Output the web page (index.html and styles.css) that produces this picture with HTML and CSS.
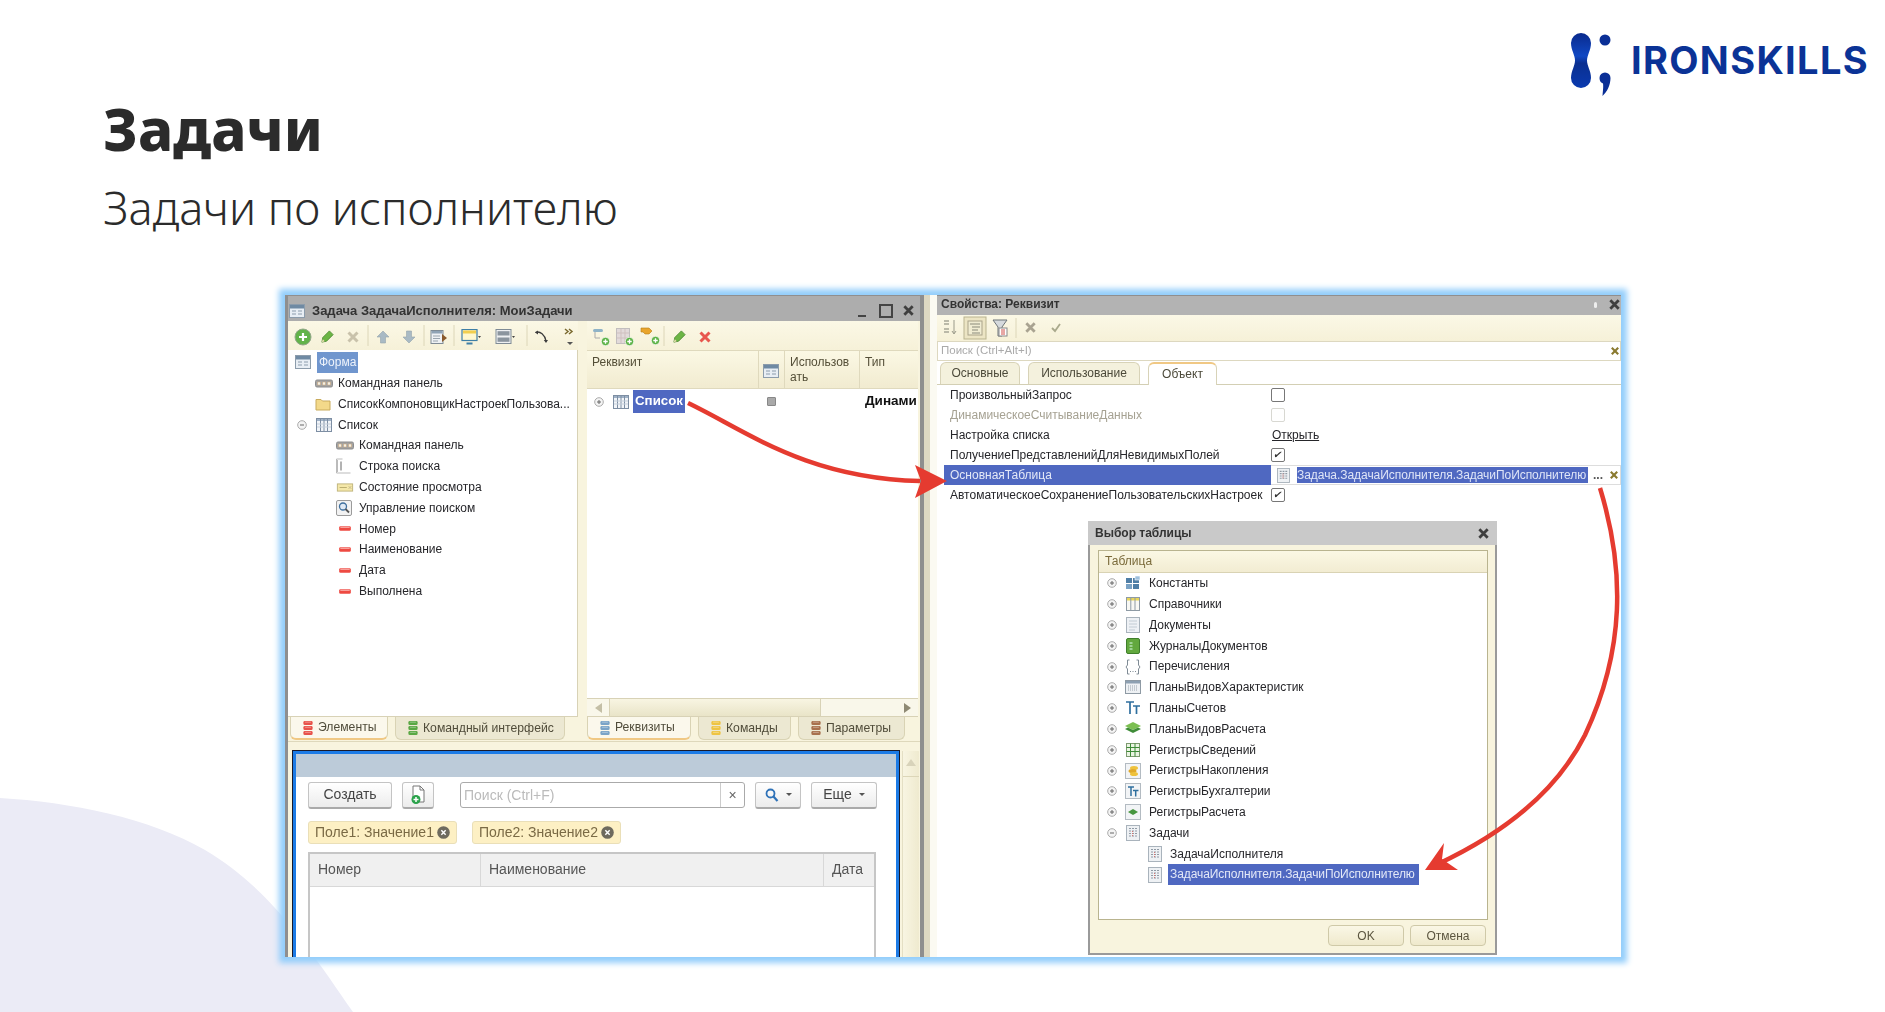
FILE: index.html
```html
<!DOCTYPE html>
<html>
<head>
  <title>Задачи</title>
  <link rel="stylesheet" href="styles.css">
</head>
<body>

<svg class="defs" width="0" height="0">
  <defs>
    <linearGradient id="logoGrad" x1="0" y1="0" x2="0" y2="1">
      <stop offset="0" stop-color="#0a2a8c"/><stop offset=".42" stop-color="#1048c4"/><stop offset=".55" stop-color="#0a2f90"/><stop offset="1" stop-color="#0a3ab0"/>
    </linearGradient>
    <symbol id="plus" viewBox="0 0 10 10"><circle cx="5" cy="5" r="4.3" fill="#f4f4f4" stroke="#aaa"/><path d="M3 5h4M5 3v4" stroke="#666" stroke-width="1"/></symbol>
    <symbol id="minus" viewBox="0 0 10 10"><circle cx="5" cy="5" r="4.3" fill="#f4f4f4" stroke="#aaa"/><path d="M3 5h4" stroke="#666" stroke-width="1"/></symbol>
    <symbol id="form" viewBox="0 0 16 16"><rect x=".5" y="1.5" width="15" height="13" fill="#e8eef4" stroke="#8c9cab"/><rect x="1" y="2" width="14" height="3.5" fill="#6f8aa3"/><path d="M3 8h4M9 8h4M3 11h4M9 11h4" stroke="#aab8c4" stroke-width="1.4"/></symbol>
    <symbol id="cmd" viewBox="0 0 18 9"><rect x=".5" y="1" width="17" height="7" rx="1.5" fill="#a3a3a3" stroke="#8d8d8d"/><path d="M2.500 3h3v3h-3zM7.500 3h3v3h-3zM12.500 3h3v3h-3z" fill="#f4f0e4" stroke="#c8a070" stroke-width=".5"/></symbol>
    <symbol id="folder" viewBox="0 0 16 16"><path d="M1 3.500h5l1.500 1.500H15v9H1z" fill="#f3d98a" stroke="#c9ab5c"/></symbol>
    <symbol id="table" viewBox="0 0 16 16"><rect x=".5" y="1.500" width="15" height="13" fill="#f1f4f8" stroke="#7d8ea3"/><rect x="1" y="2" width="14" height="2" fill="#9fb1c6"/><path d="M4.500 2v12M8 2v12M11.500 2v12" stroke="#7d8ea3"/><path d="M1 7h14M1 10h14" stroke="#c5cfdb"/></symbol>
    <symbol id="searchline" viewBox="0 0 16 16"><path d="M.5 1h6M.5 1v14h14M1.500 2v12" fill="none" stroke="#bbb"/><path d="M5 3.500v9" stroke="#666"/></symbol>
    <symbol id="state" viewBox="0 0 18 10"><rect x=".5" y="1" width="17" height="8" fill="#f4e7a8" stroke="#bdb27a"/><path d="M3 5h8" stroke="#b5a86a"/><path d="M13 3.500l3 3M16 3.500l-3 3" stroke="#c4b98a"/></symbol>
    <symbol id="findbox" viewBox="0 0 16 16"><rect x=".5" y=".5" width="15" height="15" rx="1.500" fill="#f2f2f2" stroke="#9b9b9b"/><circle cx="7" cy="6.500" r="3.500" fill="#dfe9f4" stroke="#3e6f9e" stroke-width="1.300"/><path d="M9.500 9l3.500 3.500" stroke="#555" stroke-width="1.800"/></symbol>
    <symbol id="field" viewBox="0 0 12 6"><rect x="1" y="1" width="10" height="4" rx="1.200" fill="#ee4a42"/><path d="M2 2h8" stroke="#f9aaa5"/></symbol>
    <symbol id="addgreen" viewBox="0 0 18 18"><circle cx="9" cy="9" r="8" fill="#62b34a" stroke="#93a78a"/><path d="M9 5v8M5 9h8" stroke="#fff" stroke-width="2.200"/></symbol>
    <symbol id="mini" viewBox="0 0 8 8"><circle cx="4" cy="4" r="3.700" fill="#5cb246" stroke="#fff" stroke-width=".6"/><path d="M4 2v4M2 4h4" stroke="#fff" stroke-width="1.200"/></symbol>
    <symbol id="pencil" viewBox="0 0 16 16"><path d="M2 14l1-5 7-7 4 4-7 7z" fill="#6cb545" stroke="#3f7f28" stroke-width=".8"/><path d="M2 14l1-3 2 2z" fill="#f3e2b8"/></symbol>
    <symbol id="cross" viewBox="0 0 14 14"><path d="M2.500 2.500l9 9M11.500 2.500l-9 9" stroke="currentColor" stroke-width="3"/></symbol>
    <symbol id="up" viewBox="0 0 16 16"><path d="M8 2l6 6h-3.500v6h-5V8H2z" fill="#a9bac4" stroke="#96a4ac" stroke-width=".6"/></symbol>
    <symbol id="down" viewBox="0 0 16 16"><path d="M8 14l6-6h-3.500V2h-5v6H2z" fill="#a9bac4" stroke="#96a4ac" stroke-width=".6"/></symbol>
    <symbol id="run" viewBox="0 0 18 16"><rect x="1" y="1.500" width="12" height="13" fill="#eef1f4" stroke="#7f8b95"/><rect x="1.500" y="2" width="11" height="2.500" fill="#8fa3b5"/><path d="M3 7h7M3 9.500h7M3 12h5" stroke="#9aa5ae"/><path d="M12 5l5 4-5 4z" fill="#8a5a2c"/></symbol>
    <symbol id="monitor" viewBox="0 0 20 16"><rect x="1" y=".5" width="15" height="11" fill="#fff8cf" stroke="#3f7fa6" stroke-width="1.200"/><rect x="2" y="1.500" width="13" height="3" fill="#f2cf4f"/><path d="M5.500 14.500h6" stroke="#3f7fa6" stroke-width="2"/><path d="M17 7h3l-1.500 2z" fill="#444"/></symbol>
    <symbol id="rows" viewBox="0 0 20 16"><rect x="1" y=".5" width="15" height="14" fill="#eef0f2" stroke="#7f8b95"/><rect x="2.500" y="2.200" width="12" height="4.300" fill="#8b959e"/><rect x="2.500" y="8.500" width="12" height="4.300" fill="#8b959e"/><path d="M17 7h3l-1.500 2z" fill="#444"/></symbol>
    <symbol id="curve" viewBox="0 0 16 16"><path d="M1.500 3.500C6 1.500 11 6 12 12" fill="none" stroke="#3c3c3c" stroke-width="1.300"/><path d="M1 3.500L4 1.500v4zM12 14l-2.200-3h4.200z" fill="#3c3c3c"/></symbol>
    <symbol id="attr" viewBox="0 0 16 16"><rect x="1" y="1" width="10" height="3" rx="1.500" fill="#8fb3c7"/><path d="M3 4v6h5" fill="none" stroke="#aaa"/></symbol>
    <symbol id="gridgray" viewBox="0 0 16 16"><rect x=".5" y=".5" width="13" height="15" fill="#e2dada" stroke="#c2bebe"/><path d="M5 1v14M9 1v14M1 5h12M1 10h12" stroke="#cfc0bf"/></symbol>
    <symbol id="key" viewBox="0 0 16 16"><path d="M1 1h8l3 3-3 3H5L3 5H1z" fill="#e9a52c" stroke="#b67c19" stroke-width=".6"/></symbol>
    <symbol id="stack" viewBox="0 0 12 18"><rect x=".5" y=".5" width="11" height="4.800" rx="1.500" fill="currentColor"/><rect x=".5" y="6.600" width="11" height="4.800" rx="1.500" fill="currentColor"/><rect x=".5" y="12.700" width="11" height="4.800" rx="1.500" fill="currentColor"/><path d="M2.500 2h7M2.500 8.100h7M2.500 14.200h7" stroke="#fff" stroke-opacity=".45"/></symbol>
    <symbol id="newdoc" viewBox="0 0 16 20"><path d="M3 1h7l4 4v12H3z" fill="#fff" stroke="#777"/><path d="M10 1v4h4" fill="none" stroke="#777"/><circle cx="6" cy="14.500" r="4.500" fill="#2aa24a"/><path d="M6 12v5M3.500 14.500h5" stroke="#fff" stroke-width="1.500"/></symbol>
    <symbol id="lens" viewBox="0 0 14 14"><circle cx="5.500" cy="5.500" r="4" fill="none" stroke="#2e72b8" stroke-width="1.800"/><path d="M8.500 8.500l4 4.500" stroke="#2e72b8" stroke-width="2.200"/></symbol>
    <symbol id="chipx" viewBox="0 0 12 12"><circle cx="6" cy="6" r="5.800" fill="#6e6a5e"/><path d="M4 4l4 4M8 4l-4 4" stroke="#fff" stroke-width="1.300"/></symbol>
    <symbol id="sortaz" viewBox="0 0 14 18"><path d="M11 2v13M9 13l2 3 2-3" fill="none" stroke="#9a9a8a"/><path d="M1 3h5M1 6h5M1 11h5M1 14h5" stroke="#a6a696" stroke-width="1.300"/></symbol>
    <symbol id="tree" viewBox="0 0 16 16"><rect x="1" y="1" width="14" height="14" fill="#f0ecd2" stroke="#aaa48a"/><path d="M3 4h10M5 7h8M5 10h6M5 13h8" stroke="#8a8a7a"/></symbol>
    <symbol id="funnel" viewBox="0 0 16 18"><path d="M1 1h14L10 8v9H6V8z" fill="#d6dadd" stroke="#6d7478"/><rect x="7" y="9" width="8" height="8" fill="#fff" stroke="#888"/><path d="M9 11h4M9 13h4M9 15h4" stroke="#d0504a"/></symbol>
    <symbol id="check" viewBox="0 0 12 12"><path d="M2 6l3 3 5-7" fill="none" stroke="#a9a98c" stroke-width="1.800"/></symbol>
    <symbol id="task" viewBox="0 0 14 16"><rect x=".5" y=".5" width="13" height="15" fill="#eef1f4" stroke="#a9b3bc"/><path d="M3 3.500h8M3 6h8M3 8.500h8M3 11h8" stroke="#8f9aa5" stroke-dasharray="2 1" stroke-width="1.200"/><path d="M6.500 6v6" stroke="#d6746e" stroke-dasharray="1 1"/></symbol>
    <symbol id="const" viewBox="0 0 16 16"><rect x="1" y="3" width="6" height="5" fill="#4f7ea6"/><rect x="8" y="3" width="6" height="5" fill="#4f7ea6"/><rect x="1" y="9" width="6" height="5" fill="#7aa2c4"/><rect x="8" y="9" width="6" height="5" fill="#4f7ea6"/><rect x="10" y="1" width="5" height="4" fill="#9dbfdc" stroke="#fff" stroke-width=".6"/></symbol>
    <symbol id="catalog" viewBox="0 0 16 16"><rect x="1.500" y="1.500" width="13" height="13" fill="#f8f8f4" stroke="#8e9aa4"/><rect x="2" y="2" width="12" height="2.500" fill="#e8d55a"/><path d="M5.800 2v12M10 2v12" stroke="#8e9aa4"/></symbol>
    <symbol id="doc" viewBox="0 0 16 16"><rect x="1.500" y=".5" width="13" height="15" fill="#eef1f5" stroke="#a9b3bc"/><path d="M4 4h8M4 7h8M4 10h8M4 13h6" stroke="#c3ccd4"/></symbol>
    <symbol id="journal" viewBox="0 0 16 16"><rect x="1.500" y=".5" width="13" height="15" rx="1.500" fill="#62a83e" stroke="#3f7f2c"/><path d="M4.500 5h3M4.500 8h3M4.500 11h3" stroke="#dfe"/></symbol>
    <symbol id="enum" viewBox="0 0 16 16"><path d="M4.500 1H2.500v5L1 8l1.500 2v5h2M11.500 1h2v5L15 8l-1.500 2v5h-2" fill="none" stroke="#7f8b95"/><path d="M5 12.500h1M7.500 12.500h1M10 12.500h1" stroke="#7f8b95"/></symbol>
    <symbol id="chart" viewBox="0 0 16 16"><rect x=".5" y="1.500" width="15" height="13" fill="#eef1f4" stroke="#8e9aa4"/><rect x="1" y="2" width="14" height="2.500" fill="#8da0b2"/><path d="M3 7h10M3 9h10M3 11h10" stroke="#99a4ae" stroke-dasharray="1 1"/></symbol>
    <symbol id="ttsym" viewBox="0 0 16 16"><path d="M1 2h8M5 2v12M8 6h7M11.500 6v8" stroke="#2f6f9e" stroke-width="1.700" fill="none"/></symbol>
    <symbol id="calc" viewBox="0 0 16 16"><path d="M8 1l8 4-8 4-8-4z" fill="#7cbf52"/><path d="M0 8l3-1.500 5 2.500 5-2.500 3 1.500-8 4z" fill="#3f8c38"/></symbol>
    <symbol id="inforeg" viewBox="0 0 16 16"><rect x="1.500" y="1.500" width="13" height="13" fill="#eaf4e2" stroke="#7d9a70"/><path d="M1.500 5.500h13M1.500 9.500h13M5.500 1.500v13M10 1.500v13" stroke="#3d8a37"/></symbol>
    <symbol id="accum" viewBox="0 0 16 16"><rect x=".5" y=".5" width="15" height="15" fill="#f2f4f6" stroke="#b3bbc2"/><ellipse cx="9" cy="5" rx="4" ry="2" fill="#eec23c"/><ellipse cx="7.500" cy="8" rx="4" ry="2" fill="#e0a92a"/><ellipse cx="9" cy="11" rx="4" ry="2" fill="#eec23c"/></symbol>
    <symbol id="accreg" viewBox="0 0 16 16"><rect x=".5" y=".5" width="15" height="15" fill="#f2f4f6" stroke="#b3bbc2"/><path d="M3 4h6M6 4v9M8 7.500h5.500M10.700 7.500v6" stroke="#2f6f9e" stroke-width="1.500" fill="none"/></symbol>
    <symbol id="calcreg" viewBox="0 0 16 16"><rect x=".5" y=".5" width="15" height="15" fill="#f2f4f6" stroke="#b3bbc2"/><path d="M8 5l5 3-5 3-5-3z" fill="#46963f"/></symbol>
  </defs>
</svg>

<div class="slide">
  <svg class="blob" width="360" height="220" viewBox="0 792 360 220">
    <path d="M0 798C70 802 150 818 205 850C270 888 310 950 353 1012H0Z" fill="#ebebf6"/>
  </svg>

  <header class="top">
    <div class="heading">
      <h1>Задачи</h1>
      <p>Задачи по исполнителю</p>
    </div>
    <div class="logo">
      <svg width="44" height="68" viewBox="0 0 44 68">
        <path d="M2 13A10 10 0 0 1 22 13C22 20 18 25 18 30.500C18 36 22 41 22 48A10 10 0 0 1 2 48C2 41 6 36 6 30.500C6 25 2 20 2 13Z" fill="url(#logoGrad)"/>
        <circle cx="36" cy="10" r="5.500" fill="#0a2f96"/>
        <path d="M30.500 48A5.500 5.500 0 0 1 41.500 48C41.500 55 38 62 33.500 66C34 60 34.500 57 34 53.500C32 53 30.500 51 30.500 48Z" fill="#0a2f96"/>
      </svg>
      <span>IRONSKILLS</span>
    </div>
  </header>

  <div class="shot">
    <div class="shot-inner">

      <section class="win-left">
        <div class="titlebar left-title">
          <svg class="ic title-ic"><use href="#form"/></svg>
          <b>Задача ЗадачаИсполнителя: МоиЗадачи</b>
          <span class="win-btns">
            <i class="btn-min"></i><i class="btn-max"></i>
            <svg width="13" height="13"><use href="#cross" width="13" height="13" color="#3f3f3f"/></svg>
          </span>
        </div>

        <div class="left-body">
          <div class="panes">
            <div class="pane pane-tree">
              <svg class="strip" width="290" height="29" viewBox="288 321 290 29">
                <use href="#addgreen" x="294" y="328" width="18" height="18"/>
                <use href="#pencil" x="320" y="329" width="15" height="15"/>
                <use href="#cross" x="346" y="330" width="14" height="14" color="#c9c2ab"/>
                <path d="M368 325v21M424 325v21M454 325v21M527 325v21" stroke="#dcd6b8"/>
                <use href="#up" x="375" y="329" width="16" height="16"/>
                <use href="#down" x="401" y="329" width="16" height="16"/>
                <use href="#run" x="430" y="329" width="18" height="16"/>
                <use href="#monitor" x="461" y="329" width="20" height="16"/>
                <use href="#rows" x="495" y="329" width="20" height="16"/>
                <use href="#curve" x="534" y="329" width="16" height="16"/>
                <path d="M565 329l3 2.500-3 2.500M569 329l3 2.500-3 2.500" fill="none" stroke="#7b6a30" stroke-width="1.500"/>
                <path d="M567 342h6l-3 3z" fill="#555"/>
              </svg>
              <div class="tree">
                <div class="row root"><svg class="ic"><use href="#form"/></svg><span class="sel-form">Форма</span></div>
                <div class="row l1"><svg class="ic wide"><use href="#cmd"/></svg><span>Командная панель</span></div>
                <div class="row l1"><svg class="ic"><use href="#folder"/></svg><span>СписокКомпоновщикНастроекПользова...</span></div>
                <div class="row l1 has-exp"><svg class="exp"><use href="#minus"/></svg><svg class="ic"><use href="#table"/></svg><span>Список</span></div>
                <div class="row l2"><svg class="ic wide"><use href="#cmd"/></svg><span>Командная панель</span></div>
                <div class="row l2"><svg class="ic"><use href="#searchline"/></svg><span>Строка поиска</span></div>
                <div class="row l2"><svg class="ic wide"><use href="#state"/></svg><span>Состояние просмотра</span></div>
                <div class="row l2"><svg class="ic"><use href="#findbox"/></svg><span>Управление поиском</span></div>
                <div class="row l2"><svg class="ic small"><use href="#field"/></svg><span>Номер</span></div>
                <div class="row l2"><svg class="ic small"><use href="#field"/></svg><span>Наименование</span></div>
                <div class="row l2"><svg class="ic small"><use href="#field"/></svg><span>Дата</span></div>
                <div class="row l2"><svg class="ic small"><use href="#field"/></svg><span>Выполнена</span></div>
              </div>
              <div class="tabs tabs-left">
                <div class="tab active t-elements"><svg class="stack red"><use href="#stack"/></svg>Элементы</div>
                <div class="tab t-iface"><svg class="stack green"><use href="#stack"/></svg>Командный интерфейс</div>
              </div>
            </div>

            <div class="pane pane-attrs">
              <svg class="strip" width="331" height="29" viewBox="587 321 331 29">
                <use href="#attr" x="592" y="328" width="16" height="16"/><use href="#mini" x="601" y="337" width="9" height="9"/>
                <use href="#gridgray" x="616" y="328" width="16" height="16"/><use href="#mini" x="625" y="337" width="9" height="9"/>
                <use href="#key" x="640" y="327" width="16" height="16"/><use href="#mini" x="651" y="336" width="9" height="9"/>
                <path d="M664 326v20" stroke="#dcd6b8"/>
                <use href="#pencil" x="672" y="329" width="15" height="15"/>
                <use href="#cross" x="698" y="330" width="14" height="14" color="#e8574e"/>
              </svg>
              <div class="attr-head">
                <div class="col-name">Реквизит</div>
                <div class="col-ic"><svg class="ic"><use href="#form"/></svg></div>
                <div class="col-use">Использов<br>ать</div>
                <div class="col-type">Тип</div>
              </div>
              <div class="attr-body">
                <div class="attr-row">
                  <svg class="exp"><use href="#plus"/></svg>
                  <svg class="ic"><use href="#table"/></svg>
                  <b class="sel-list">Список</b>
                  <i class="mini-check"></i>
                  <b class="dyn">Динами</b>
                </div>
              </div>
              <div class="hscroll">
                <span class="arrow-l"></span>
                <div class="thumb"></div>
                <span class="arrow-r"></span>
              </div>
              <div class="tabs tabs-right">
                <div class="tab active"><svg class="stack blue"><use href="#stack"/></svg>Реквизиты</div>
                <div class="tab"><svg class="stack yellow"><use href="#stack"/></svg>Команды</div>
                <div class="tab"><svg class="stack brown"><use href="#stack"/></svg>Параметры</div>
              </div>
            </div>
          </div>

          <div class="preview-wrap">
            <div class="preview">
              <div class="preview-title"></div>
              <div class="preview-bar">
                <div class="pbtn p-create">Создать</div>
                <div class="pbtn p-new"><svg width="16" height="20"><use href="#newdoc"/></svg></div>
                <div class="psearch"><span>Поиск (Ctrl+F)</span><em>×</em></div>
                <div class="pbtn p-find"><svg width="14" height="14"><use href="#lens"/></svg><i class="caret"></i></div>
                <div class="pbtn p-more">Еще<i class="caret"></i></div>
              </div>
              <div class="chips">
                <div class="chip">Поле1: Значение1<svg width="13" height="13"><use href="#chipx"/></svg></div>
                <div class="chip">Поле2: Значение2<svg width="13" height="13"><use href="#chipx"/></svg></div>
              </div>
              <div class="ptable">
                <div class="pth th-num">Номер</div>
                <div class="pth th-name">Наименование</div>
                <div class="pth th-date">Дата</div>
              </div>
            </div>
            <div class="vscroll"><span></span></div>
          </div>
        </div>
      </section>

      <div class="gutter"></div>

      <section class="win-props">
        <div class="titlebar props-title">
          <b>Свойства: Реквизит</b>
          <span class="win-btns">
            <i class="pin"></i>
            <svg width="13" height="13"><use href="#cross" width="13" height="13" color="#3f3f3f"/></svg>
          </span>
        </div>
        <svg class="strip props-strip" width="684" height="26" viewBox="937 315 684 26">
          <use href="#sortaz" x="943" y="318" width="14" height="18"/>
          <rect x="964" y="317" width="22" height="22" fill="#ece5c4" stroke="#b9b38f"/>
          <use href="#tree" x="967" y="320" width="16" height="16"/>
          <use href="#funnel" x="992" y="319" width="16" height="18"/>
          <path d="M1016 318v20" stroke="#dcd6b8"/>
          <use href="#cross" x="1024" y="321" width="13" height="13" color="#a9a391"/>
          <use href="#check" x="1050" y="322" width="12" height="12"/>
        </svg>
        <div class="props-search"><span>Поиск (Ctrl+Alt+I)</span><svg width="10" height="10"><use href="#cross" width="10" height="10" color="#8a7a30"/></svg></div>
        <div class="props-tabs">
          <div class="ptab">Основные</div>
          <div class="ptab">Использование</div>
          <div class="ptab active">Объект</div>
        </div>
        <div class="props-rows">
          <div class="prow"><div class="plabel">ПроизвольныйЗапрос</div><div class="pval"><i class="cb"></i></div></div>
          <div class="prow off"><div class="plabel">ДинамическоеСчитываниеДанных</div><div class="pval"><i class="cb"></i></div></div>
          <div class="prow"><div class="plabel">Настройка списка</div><div class="pval"><u>Открыть</u></div></div>
          <div class="prow"><div class="plabel">ПолучениеПредставленийДляНевидимыхПолей</div><div class="pval"><i class="cb on"></i></div></div>
          <div class="prow cur">
            <div class="plabel">ОсновнаяТаблица</div>
            <div class="pval edit">
              <svg width="13" height="15"><use href="#task"/></svg>
              <span class="sel-val">Задача.ЗадачаИсполнителя.ЗадачиПоИсполнителю</span>
              <span class="dots">...</span>
              <svg width="10" height="10"><use href="#cross" width="10" height="10" color="#8a7a30"/></svg>
            </div>
          </div>
          <div class="prow"><div class="plabel">АвтоматическоеСохранениеПользовательскихНастроек</div><div class="pval"><i class="cb on"></i></div></div>
        </div>
      </section>

      <section class="dialog">
        <div class="dlg-title"><b>Выбор таблицы</b><svg width="13" height="13"><use href="#cross" width="13" height="13" color="#3f3f3f"/></svg></div>
        <div class="dlg-panel">
          <div class="dlg-head">Таблица</div>
          <div class="dlg-list">
            <div class="drow"><svg class="exp"><use href="#plus"/></svg><svg class="ic"><use href="#const"/></svg><span>Константы</span></div>
            <div class="drow"><svg class="exp"><use href="#plus"/></svg><svg class="ic"><use href="#catalog"/></svg><span>Справочники</span></div>
            <div class="drow"><svg class="exp"><use href="#plus"/></svg><svg class="ic"><use href="#doc"/></svg><span>Документы</span></div>
            <div class="drow"><svg class="exp"><use href="#plus"/></svg><svg class="ic"><use href="#journal"/></svg><span>ЖурналыДокументов</span></div>
            <div class="drow"><svg class="exp"><use href="#plus"/></svg><svg class="ic"><use href="#enum"/></svg><span>Перечисления</span></div>
            <div class="drow"><svg class="exp"><use href="#plus"/></svg><svg class="ic"><use href="#chart"/></svg><span>ПланыВидовХарактеристик</span></div>
            <div class="drow"><svg class="exp"><use href="#plus"/></svg><svg class="ic"><use href="#ttsym"/></svg><span>ПланыСчетов</span></div>
            <div class="drow"><svg class="exp"><use href="#plus"/></svg><svg class="ic"><use href="#calc"/></svg><span>ПланыВидовРасчета</span></div>
            <div class="drow"><svg class="exp"><use href="#plus"/></svg><svg class="ic"><use href="#inforeg"/></svg><span>РегистрыСведений</span></div>
            <div class="drow"><svg class="exp"><use href="#plus"/></svg><svg class="ic"><use href="#accum"/></svg><span>РегистрыНакопления</span></div>
            <div class="drow"><svg class="exp"><use href="#plus"/></svg><svg class="ic"><use href="#accreg"/></svg><span>РегистрыБухгалтерии</span></div>
            <div class="drow"><svg class="exp"><use href="#plus"/></svg><svg class="ic"><use href="#calcreg"/></svg><span>РегистрыРасчета</span></div>
            <div class="drow"><svg class="exp"><use href="#minus"/></svg><svg class="ic"><use href="#task"/></svg><span>Задачи</span></div>
            <div class="drow child"><svg class="ic"><use href="#task"/></svg><span>ЗадачаИсполнителя</span></div>
            <div class="drow child"><svg class="ic"><use href="#task"/></svg><span class="sel-task">ЗадачаИсполнителя.ЗадачиПоИсполнителю</span></div>
          </div>
        </div>
        <div class="dlg-btns">
          <div class="dbtn">OK</div>
          <div class="dbtn">Отмена</div>
        </div>
      </section>
    </div>
  </div>

  <svg class="arrows" width="1885" height="1012">
    <g fill="none" stroke="#e53b30" stroke-width="4.500">
      <path d="M688 403C745 430 805 478 920 481"/>
      <path d="M1600 488C1625 570 1625 650 1585 735C1555 795 1500 835 1438 864"/>
    </g>
    <path d="M947 481L915 465L921 481L915 498Z" fill="#e53b30"/>
    <path d="M1425 870L1444 843L1442 859L1458 870Z" fill="#e53b30"/>
  </svg>
</div>

</body>
</html>
```

FILE: styles.css
```css
html, body {
  margin: 0;
  background: #fff;
}
.defs {
  position: absolute;
}
.slide {
  position: relative;
  width: 1885px;
  height: 1012px;
  overflow: hidden;
  background: #fff;
}
.blob {
  position: absolute;
  left: 0;
  bottom: 0;
}
.arrows {
  position: absolute;
  left: 0;
  top: 0;
  pointer-events: none;
}

/* slide header */
.top {
  position: relative;
  display: flex;
  justify-content: space-between;
  height: 295px;
  box-sizing: border-box;
  padding-left: 103px;
  padding-right: 16px;
}
.heading h1 {
  margin: 89px 0 0;
  font: 800 58px/80px "Noto Sans", sans-serif;
  color: #2b2b2b;
}
.heading p {
  margin: 9px 0 0;
  font: 300 45.2px/60px "Noto Sans", sans-serif;
  color: #2b2b2b;
}
.logo {
  display: flex;
  align-items: flex-start;
  margin-top: 30px;
  height: 68px;
}
.logo span {
  margin: 8px 0 0 18px;
  font: 700 38px/44px "Inter", sans-serif;
  letter-spacing: 1.35px;
  color: #0b3396;
}

/* screenshot */
.shot {
  position: relative;
  margin-left: 285px;
  width: 1336px;
  height: 662px;
  box-shadow: 0 0 6px 6px #93cefb;
}
.shot-inner {
  position: relative;
  display: flex;
  width: 100%;
  height: 100%;
  overflow: hidden;
  background: #fff;
  filter: blur(.5px);
  font: 12px/1.2 "Liberation Sans", sans-serif;
  color: #26262a;
}
.ic {
  width: 16px;
  height: 16px;
  flex: none;
}
.ic.wide {
  width: 18px;
  height: 9px;
}
.ic.small {
  width: 14px;
  height: 7px;
  margin-left: 2px;
}
.exp {
  width: 10px;
  height: 10px;
  flex: none;
}
.strip {
  display: block;
  flex: none;
  background: linear-gradient(#fbf8e6, #f6f1d8);
}
.titlebar {
  display: flex;
  align-items: center;
  height: 26px;
  background: #adadad;
  border-top: 1px solid #8f8f8f;
  box-sizing: border-box;
  padding: 0 5px;
}
.titlebar b {
  font-size: 13px;
  color: #333;
}
.left-title {
  padding: 4px 5px 0 1px;
}
.title-ic {
  margin-right: 7px;
}
.win-btns {
  display: flex;
  align-items: center;
  gap: 8px;
  margin-left: auto;
}
.btn-min {
  width: 8px;
  height: 2px;
  margin-top: 10px;
  background: #444;
}
.btn-max {
  width: 10px;
  height: 10px;
  border: 2px solid #444;
  margin: 0 1px 0 5px;
}
.pin {
  width: 3px;
  height: 6px;
  background: #eee;
  border-radius: 2px;
  margin-right: 3px;
}

/* left window */
.win-left {
  width: 635px;
  flex: none;
  display: flex;
  flex-direction: column;
  border-left: 3px solid #8f8f8f;
  box-sizing: border-box;
}
.left-body {
  flex: 1;
  display: flex;
  flex-direction: column;
  min-height: 0;
  background: #f8f4de;
}
.panes {
  display: flex;
  gap: 9px;
  height: 420px;
  flex: none;
  border-bottom: 1px solid #ded8bb;
}
.pane {
  display: flex;
  flex-direction: column;
}
.pane-tree {
  width: 290px;
}
.pane-attrs {
  width: 331px;
}
.tree {
  flex: 1;
  padding-top: 2px;
  background: #fff;
  border-right: 1px solid #d8d2b6;
  border-bottom: 1px solid #d8d2b6;
}
.row {
  display: flex;
  align-items: center;
  height: 20.8px;
  white-space: nowrap;
}
.row.root { padding-left: 7px; gap: 6px; }
.row.l1 { padding-left: 27px; gap: 7px; }
.row.l2 { padding-left: 48px; gap: 7px; }
.row.has-exp { padding-left: 9px; gap: 0; }
.row.has-exp .exp { margin-right: 9px; }
.row.has-exp .ic { margin-right: 6px; }
.row .wide + span { margin-left: -2px; }
.sel-form {
  background: #7096ce;
  color: #eef3fb;
  padding: 3px 2px;
}

/* bottom tabs */
.tabs {
  display: flex;
  flex: none;
  height: 24px;
  padding-left: 2px;
  gap: 7px;
  font-size: 12.2px;
}
.tab {
  display: flex;
  align-items: center;
  gap: 5px;
  padding: 0 6px 0 12px;
  box-sizing: border-box;
  height: 23px;
  background: #ece8d2;
  border: 1px solid #d9d3b4;
  border-top: 0;
  border-radius: 0 0 6px 6px;
  color: #504c3a;
  white-space: nowrap;
}
.tab.active {
  background: #fbf8ec;
  border-bottom: 2px solid #f0c884;
}
.t-elements { width: 98px; }
.t-iface { width: 170px; }
.tabs-right .tab:nth-child(1) { width: 104px; }
.tabs-right .tab:nth-child(2) { width: 93px; }
.tabs-right .tab:nth-child(3) { width: 107px; }
.tabs-right {
  padding-left: 0;
}
.stack {
  width: 10px;
  height: 16px;
  flex: none;
}
.red { color: #e8534a; }
.green { color: #5aa845; }
.blue { color: #7ba4c7; }
.yellow { color: #eec443; }
.brown { color: #a8714d; }

/* attributes table */
.attr-head {
  display: flex;
  flex: none;
  height: 39px;
  background: linear-gradient(#fbf8e4, #f1ebd0);
  border-top: 1px solid #dfd9bd;
  border-bottom: 1px solid #dfd9bd;
  box-sizing: border-box;
  color: #544f38;
  line-height: 15px;
}
.attr-head > div {
  padding: 4px 5px;
  box-sizing: border-box;
  border-right: 1px solid #dfd9bd;
}
.col-name { width: 172px; }
.col-ic { width: 26px; padding: 12px 4px 0 !important; }
.col-use { width: 75px; }
.col-type { flex: 1; border-right: 0 !important; }
.attr-body {
  flex: 1;
  background: #fff;
  border-bottom: 1px solid #d8d2b6;
  overflow: hidden;
}
.attr-row {
  display: flex;
  align-items: center;
  height: 25px;
  padding-left: 7px;
  white-space: nowrap;
}
.attr-row .ic {
  margin-left: 9px;
}
.sel-list {
  margin-left: 4px;
  padding: 3px 2px 4px;
  width: 52px;
  box-sizing: border-box;
  background: #4f68c1;
  color: #fff;
  font-size: 13.3px;
}
.mini-check {
  width: 7px;
  height: 7px;
  margin-left: 82px;
  flex: none;
  background: #a9a9a9;
  border: 1px solid #888;
  border-radius: 1px;
}
.dyn {
  margin-left: 89px;
  color: #111;
  font-size: 13.5px;
}
.hscroll {
  display: flex;
  align-items: center;
  flex: none;
  height: 17px;
  background: #f9f7ea;
  border-bottom: 1px solid #d8d2b6;
}
.thumb {
  width: 210px;
  height: 100%;
  background: linear-gradient(#f8f5e2, #e9e4c8);
  border-right: 1px solid #d8d2b6;
  border-left: 1px solid #d8d2b6;
}
.arrow-l, .arrow-r {
  width: 0;
  height: 0;
  margin: 0 7px 0 8px;
  border: 5px solid transparent;
  border-left: 0;
  border-right: 7px solid #c4bfa6;
}
.arrow-r {
  margin: 0 7px 0 auto;
  border-right: 0;
  border-left: 7px solid #8f8a74;
}

/* preview of the form */
.preview-wrap {
  flex: 1;
  display: flex;
  min-height: 0;
  padding: 9px 0 0 5px;
  gap: 3px;
  background: #f8f4de;
}
.preview {
  width: 606px;
  flex: none;
  background: #fff;
  border: 3px solid #1c7be6;
  border-bottom: 0;
  outline: 1px solid #1a1a2a;
  box-sizing: border-box;
  font-size: 14px;
  color: #555;
}
.preview-title {
  height: 23px;
  background: #bccbd9;
}
.preview-bar {
  display: flex;
  align-items: center;
  margin: 4px 0 0 12px;
  height: 28px;
}
.pbtn {
  display: flex;
  align-items: center;
  justify-content: center;
  height: 27px;
  box-sizing: border-box;
  background: linear-gradient(#fff, #ececec);
  border: 1px solid #c4c4c4;
  border-bottom: 2px solid #aaa;
  border-radius: 3px;
  color: #444;
}
.p-create { width: 84px; }
.p-new { width: 32px; margin-left: 10px; }
.psearch {
  display: flex;
  align-items: center;
  justify-content: space-between;
  width: 285px;
  height: 26px;
  margin-left: 26px;
  box-sizing: border-box;
  border: 1px solid #aaa;
  border-radius: 3px;
  padding-left: 3px;
  color: #bbb;
}
.psearch em {
  width: 23px;
  line-height: 24px;
  text-align: center;
  font-style: normal;
  color: #666;
  border-left: 1px solid #ccc;
}
.p-find { width: 46px; margin-left: 10px; gap: 7px; }
.p-more { width: 66px; margin-left: 10px; gap: 7px; }
.caret {
  border: 3px solid transparent;
  border-top: 3px solid #555;
  border-bottom: 0;
}
.chips {
  display: flex;
  gap: 15px;
  margin: 12px 0 0 12px;
}
.chip {
  display: flex;
  align-items: center;
  justify-content: space-between;
  width: 149px;
  height: 23px;
  box-sizing: border-box;
  padding: 0 6px;
  background: #fdf0c4;
  border: 1px solid #eadfb8;
  border-radius: 3px;
  color: #7a6a45;
}
.ptable {
  display: flex;
  margin: 8px 0 0 12px;
  width: 568px;
  height: 200px;
  box-sizing: border-box;
  border: 2px solid #c6c6c6;
}
.pth {
  height: 33px;
  box-sizing: border-box;
  padding: 7px 8px 0;
  background: #f0f0f0;
  border-bottom: 1px solid #d8d8d8;
  border-right: 1px solid #d8d8d8;
  color: #555;
}
.th-num { width: 171px; }
.th-name { width: 343px; }
.th-date { flex: 1; border-right: 0; }
.vscroll {
  width: 16px;
  background: linear-gradient(90deg, #f8f5e2, #efeacf);
  border-left: 1px solid #e4dfc4;
}
.vscroll span {
  display: block;
  height: 26px;
  box-sizing: border-box;
  border-bottom: 1px solid #dcd6b8;
  position: relative;
}
.vscroll span::after {
  content: "";
  display: block;
  width: 0;
  margin: 0 auto;
  transform: translateY(8px);
  border: 5px solid transparent;
  border-top: 0;
  border-bottom: 7px solid #d8d3ba;
}

.gutter {
  width: 17px;
  flex: none;
  background: linear-gradient(90deg, #8e8e8e 4px, #ddd8c2 4px, #ddd8c2 10px, #fbfaf2 10px);
}

/* properties window */
.win-props {
  flex: 1;
  min-width: 0;
  display: flex;
  flex-direction: column;
  background: #fff;
}
.props-title {
  height: 20px;
  background: #b3b3b3;
  padding: 0 0 2px 4px;
}
.props-title b {
  font-size: 12px;
}
.props-search {
  display: flex;
  align-items: center;
  justify-content: space-between;
  height: 20px;
  flex: none;
  box-sizing: border-box;
  padding: 0 0 0 3px;
  border: 1px solid #ddd8c0;
  color: #aaa;
  font-size: 11.5px;
}
.props-tabs {
  display: flex;
  gap: 8px;
  height: 24px;
  flex: none;
  box-sizing: border-box;
  padding: 1px 0 0 3px;
  background: #fff;
  border-bottom: 1px solid #d3cfb4;
}
.ptab {
  padding-top: 3px;
  box-sizing: border-box;
  width: 80px;
  text-align: center;
  background: #f4f1dd;
  border: 1px solid #d8d3b8;
  border-bottom: 0;
  border-radius: 6px 6px 0 0;
  color: #4c4a3a;
}
.ptab:nth-child(2) { width: 112px; }
.ptab.active {
  width: 69px;
  background: #fff;
  border-top: 2px solid #f0c884;
  margin-bottom: -1px;
}
.props-rows {
  padding-left: 7px;
}
.prow {
  display: flex;
  align-items: center;
  height: 20px;
  white-space: nowrap;
}
.plabel {
  width: 327px;
  height: 100%;
  display: flex;
  align-items: center;
  flex: none;
  box-sizing: border-box;
  padding-left: 6px;
  overflow: hidden;
}
.pval {
  display: flex;
  align-items: center;
  flex: 1;
  height: 100%;
  min-width: 0;
}
.prow .pval u {
  margin-left: 1px;
}
.off { color: #a6a293; }
.cb {
  width: 12px;
  height: 12px;
  background: #fff;
  border: 1px solid #777;
  border-radius: 2px;
  position: relative;
}
.off .cb { border-color: #d8d8d2; }
.cb.on::after {
  content: "✔";
  position: absolute;
  left: 1px;
  top: -1px;
  font-size: 10px;
  line-height: 13px;
  color: #333;
}
.cur .plabel {
  background: #4f68c1;
  color: #e3e8f7;
}
.edit {
  padding-left: 6px;
  border: 1px solid #ddd;
  border-left: 0;
  box-sizing: border-box;
}
.sel-val {
  margin-left: 7px;
  width: 291px;
  flex: none;
  background: #4f68c1;
  color: #dfe5f7;
  padding: 1px 0;
  overflow: hidden;
  letter-spacing: -.05px;
}
.dots {
  margin: 0 6px 0 5px;
  font-weight: 700;
  color: #555;
}

/* table picker dialog */
.dialog {
  position: absolute;
  left: 803px;
  top: 226px;
  width: 409px;
  height: 434px;
  box-sizing: border-box;
  display: flex;
  flex-direction: column;
  background: #f8f4de;
  border: 2px solid #9a9a9a;
  border-top: 0;
}
.dlg-title {
  display: flex;
  align-items: center;
  justify-content: space-between;
  height: 24px;
  flex: none;
  padding: 0 7px;
  background: #c9c9c9;
  margin: 0 -2px;
}
.dlg-title b { color: #333; }
.dlg-panel {
  margin: 5px 7px 0 8px;
  flex: none;
  height: 370px;
  box-sizing: border-box;
  border: 1px solid #b9b48f;
  background: #fff;
}
.dlg-head {
  height: 21px;
  line-height: 21px;
  padding-left: 6px;
  background: linear-gradient(#fbf8e4, #f2ecd2);
  border-bottom: 1px solid #d9d3b4;
  color: #7a6a3a;
}
.drow {
  display: flex;
  align-items: center;
  height: 20.8px;
  padding-left: 8px;
  white-space: nowrap;
}
.drow .exp { margin-right: 8px; }
.drow .ic { margin-right: 8px; }
.drow.child { padding-left: 49px; }
.drow.child .ic { width: 14px; margin-right: 8px; }
.sel-task {
  margin-left: -2px;
  padding: 3px 2px;
  width: 251px;
  box-sizing: border-box;
  background: #4f68c1;
  color: #e3e8f7;
  letter-spacing: -.08px;
}
.dlg-btns {
  display: flex;
  justify-content: flex-end;
  gap: 6px;
  margin: 5px 9px 0 0;
}
.dbtn {
  width: 76px;
  height: 21px;
  line-height: 20px;
  box-sizing: border-box;
  text-align: center;
  background: linear-gradient(#faf7e6, #efe9cc);
  border: 1px solid #cfc9a8;
  border-radius: 4px;
  color: #5c5640;
}
```
